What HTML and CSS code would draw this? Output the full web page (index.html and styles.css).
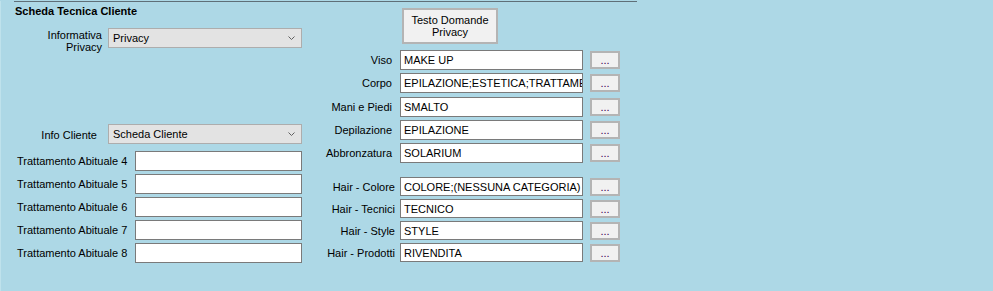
FILE: index.html
```html
<!DOCTYPE html>
<html lang="it">
<head>
<meta charset="UTF-8">
<title>Scheda Tecnica Cliente</title>
<link rel="stylesheet" href="styles.css">
</head>
<body>

<div class="form">
  <div class="group-line"></div>
  <div class="cols">

    <div class="col-left">
      <div class="title">Scheda Tecnica Cliente</div>

      <div class="field privacy">
        <label class="lbl lbl-privacy">Informativa<br>Privacy</label>
        <div class="combo">
          <span>Privacy</span>
          <svg width="7" height="4" viewBox="0 0 7 4"><path d="M0.5 0.5 L3.5 3.5 L6.5 0.5" fill="none" stroke="#606060" stroke-width="1"/></svg>
        </div>
      </div>

      <div class="field info">
        <label class="lbl lbl-info">Info Cliente</label>
        <div class="combo">
          <span>Scheda Cliente</span>
          <svg width="7" height="4" viewBox="0 0 7 4"><path d="M0.5 0.5 L3.5 3.5 L6.5 0.5" fill="none" stroke="#606060" stroke-width="1"/></svg>
        </div>
      </div>

      <div class="abituali">
        <div class="abituale"><label>Trattamento Abituale 4</label><input type="text"></div>
        <div class="abituale"><label>Trattamento Abituale 5</label><input type="text"></div>
        <div class="abituale"><label>Trattamento Abituale 6</label><input type="text"></div>
        <div class="abituale"><label>Trattamento Abituale 7</label><input type="text"></div>
        <div class="abituale"><label>Trattamento Abituale 8</label><input type="text"></div>
      </div>
    </div>

    <div class="col-right">
      <button type="button" class="btn-testo">Testo Domande<br>Privacy</button>

      <div class="cat-list">
        <div class="cat"><label>Viso</label><input type="text" value="MAKE UP"><button type="button" class="dots">...</button></div>
        <div class="cat"><label>Corpo</label><input type="text" value="EPILAZIONE;ESTETICA;TRATTAMENTI"><button type="button" class="dots">...</button></div>
        <div class="cat"><label>Mani e Piedi</label><input type="text" value="SMALTO"><button type="button" class="dots">...</button></div>
        <div class="cat"><label>Depilazione</label><input type="text" value="EPILAZIONE"><button type="button" class="dots">...</button></div>
        <div class="cat"><label>Abbronzatura</label><input type="text" value="SOLARIUM"><button type="button" class="dots">...</button></div>
      </div>

      <div class="cat-list hair">
        <div class="cat"><label>Hair - Colore</label><input type="text" value="COLORE;(NESSUNA CATEGORIA)"><button type="button" class="dots">...</button></div>
        <div class="cat"><label>Hair - Tecnici</label><input type="text" value="TECNICO"><button type="button" class="dots">...</button></div>
        <div class="cat"><label>Hair - Style</label><input type="text" value="STYLE"><button type="button" class="dots">...</button></div>
        <div class="cat"><label>Hair - Prodotti</label><input type="text" value="RIVENDITA"><button type="button" class="dots">...</button></div>
      </div>
    </div>

  </div>
</div>

</body>
</html>
```

FILE: styles.css
```css
html, body {
  margin: 0;
  padding: 0;
}
body {
  font-family: "Liberation Sans", Arial, sans-serif;
  font-size: 11px;
  color: #000;
  background-color: #add8e6;
  width: 993px;
  height: 291px;
  overflow: hidden;
}
.form {
  height: 291px;
  box-sizing: border-box;
  border-left: 1px solid #bfe2ec;
}
.group-line {
  margin: 1px 0 0 13px;
  width: 623px;
  height: 0;
  border-top: 1px solid #5f6f78;
}
.cols {
  display: flex;
  margin-left: -1px;
}

/* left side */
.col-left {
  width: 302px;
}
.title {
  margin: 3px 0 0 15px;
  font-weight: bold;
  line-height: 13px;
}
.field {
  display: flex;
  align-items: flex-start;
  height: 20px;
}
.field.privacy {
  margin-top: 10px;
}
.field.info {
  margin-top: 76px;
}
.lbl {
  text-align: right;
  flex-shrink: 0;
}
.lbl-privacy {
  width: 102px;
  margin-right: 6px;
  margin-top: 1px;
  line-height: 12px;
}
.lbl-info {
  width: 97px;
  margin-right: 11px;
  line-height: 20px;
  padding-top: 1px;
}
.combo {
  flex: 1;
  height: 20px;
  box-sizing: border-box;
  border: 1px solid #adadad;
  background-color: #e3e3e3;
  display: flex;
  align-items: center;
  justify-content: space-between;
  padding: 0 6px 0 4px;
}
.combo svg {
  display: block;
}
.abituali {
  margin-top: 7px;
  display: flex;
  flex-direction: column;
  gap: 3px;
}
.abituale {
  display: flex;
  align-items: center;
  height: 20px;
}
.abituale label {
  flex: 1;
  padding-left: 17px;
  white-space: nowrap;
}
.abituale input {
  width: 167px;
}

input {
  height: 20px;
  box-sizing: border-box;
  border: 1px solid #7a7a7a;
  background-color: #fff;
  padding: 0 0 0 3px;
  margin: 0;
  font-family: inherit;
  font-size: 11px;
  color: #000;
  outline: none;
}

/* right side */
.col-right {
  margin-left: 18px;
  width: 300px;
}
.btn-testo {
  display: block;
  margin: 6px 0 0 82px;
  width: 96px;
  height: 36px;
  padding: 0;
  border: 2px solid #b4b4b4;
  background-color: #f1f1f1;
  font-family: inherit;
  font-size: 11px;
  line-height: 12px;
  color: #000;
}
.cat-list {
  margin-top: 6px;
  display: flex;
  flex-direction: column;
  gap: 3.25px;
}
.cat {
  display: flex;
  align-items: center;
  height: 20px;
}
.cat label {
  width: 72px;
  margin-right: 8px;
  text-align: right;
  white-space: nowrap;
}
.cat input {
  width: 183px;
  margin-right: 7px;
}
.dots {
  width: 30px;
  height: 18px;
  padding: 0;
  border: 2px solid #b4b4b4;
  background-color: #f1f1f1;
  font-family: inherit;
  font-size: 11px;
  line-height: 12px;
  color: #3a0050;
}
.cat-list.hair {
  margin-top: 14px;
  gap: 3px;
}
.hair .cat {
  height: 19px;
}
.hair .cat input {
  height: 19px;
}
.hair .cat label {
  width: 75px;
  margin-right: 5px;
}
```
